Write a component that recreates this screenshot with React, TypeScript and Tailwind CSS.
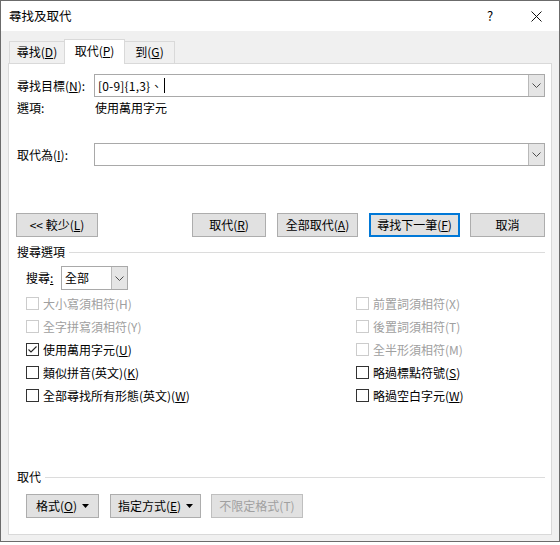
import type { ReactNode } from "react";

// Word 的「尋找及取代」對話方塊（取代分頁，展開更多選項）

function Chevron() {
  return (
    <svg width="9" height="5" viewBox="0 0 9 5">
      <polyline points="0.5,0.5 4.5,4.5 8.5,0.5" fill="none" stroke="#4d4d4d" strokeWidth="1" />
    </svg>
  );
}

function Caret() {
  return (
    <svg width="7" height="4" viewBox="0 0 7 4" className="ml-[5px]">
      <polygon points="0,0 7,0 3.5,4" fill="#000" />
    </svg>
  );
}

function Combo({ children, className }: { children?: ReactNode; className: string }) {
  return (
    <div className={`flex h-[23px] border border-[#a9a9a9] bg-white ${className}`}>
      <div className="flex flex-1 items-center overflow-hidden pl-[3px]">{children}</div>
      <div className="flex w-[16px] items-center justify-center border-l border-[#b9b9b9] bg-[#e5e5e5]">
        <Chevron />
      </div>
    </div>
  );
}

function Btn({
  children,
  className,
  primary,
  disabled,
  caret,
}: {
  children: ReactNode;
  className: string;
  primary?: boolean;
  disabled?: boolean;
  caret?: boolean;
}) {
  return (
    <div
      className={`flex h-[24px] items-center justify-center bg-[#e1e1e1] ${
        primary ? "border-2 border-[#0078d7]" : disabled ? "border border-[#bfbfbf]" : "border border-[#adadad]"
      } ${disabled ? "text-[#a0a0a0]" : "text-black"} ${className}`}
    >
      <span>{children}</span>
      {caret && <Caret />}
    </div>
  );
}

function Check({ label, checked, disabled }: { label: ReactNode; checked?: boolean; disabled?: boolean }) {
  return (
    <div className="flex h-[23px] items-center">
      <div
        className={`flex h-[13px] w-[13px] items-center justify-center border bg-white ${
          disabled ? "border-[#cccccc]" : "border-[#333333]"
        }`}
      >
        {checked && (
          <svg width="11" height="11" viewBox="0 0 11 11">
            <polyline points="1.5,5.5 4,8 9.5,2.5" fill="none" stroke="#222" strokeWidth="1.1" />
          </svg>
        )}
      </div>
      <span className={`ml-[4px] ${disabled ? "text-[#a0a0a0]" : "text-black"}`}>{label}</span>
    </div>
  );
}

function Section({ title }: { title: string }) {
  return (
    <div className="flex h-[16px] items-center">
      <span>{title}</span>
      <div className="ml-[4px] h-px flex-1 bg-[#dcdcdc]" />
    </div>
  );
}

export default function App() {
  return (
    <div className="h-[545px] w-[560px] bg-white font-['Noto_Sans_CJK_TC',sans-serif] text-[12px] leading-[16px] text-black">
      <div className="flex h-[542px] flex-col border border-[#6b6b6b] bg-[#f0f0f0]">
        {/* 標題列 */}
        <div className="flex h-[30px] items-center bg-white pl-2">
          <span className="flex-1 text-[12.5px]">尋找及取代</span>
          <span className="w-[46px] text-center text-[13px]">?</span>
          <div className="flex w-[46px] items-center justify-center">
            <svg width="11" height="11" viewBox="0 0 11 11">
              <path d="M0.5 0.5 L10.5 10.5 M10.5 0.5 L0.5 10.5" stroke="#111" strokeWidth="1" />
            </svg>
          </div>
        </div>

        {/* 分頁 */}
        <div className="flex h-[33px] items-end pl-2">
          <div className="flex h-[23px] w-[56px] items-center justify-center border border-[#d9d9d9] bg-[#f0f0f0] pb-[1px]">
            <span>
              尋找(<u>D</u>)
            </span>
          </div>
          <div className="relative z-10 -ml-px flex h-[25px] w-[61px] items-center justify-center border-x border-t border-[#d9d9d9] bg-white pb-[3px]">
            <span>
              取代(<u>P</u>)
            </span>
          </div>
          <div className="-ml-px flex h-[23px] w-[51px] items-center justify-center border border-[#d9d9d9] bg-[#f0f0f0] pb-[1px]">
            <span>
              到(<u>G</u>)
            </span>
          </div>
        </div>

        {/* 內容 */}
        <div className="mx-[7px] -mt-px flex h-[472px] flex-col border border-[#d9d9d9] bg-white pl-2 pr-[6px] pb-[16px]">
          <div className="mt-[10px] flex items-center">
            <span className="w-[77px]">
              尋找目標(<u>N</u>):
            </span>
            <Combo className="flex-1">
              <span className="tracking-[0.2px]">[0-9]{"{1,3}"}、</span>
              <span className="ml-[1px] inline-block h-[15px] w-px bg-black" />
            </Combo>
          </div>
          <div className="mt-[3px] flex h-[16px] items-center">
            <span className="w-[78px]">選項:</span>
            <span>使用萬用字元</span>
          </div>
          <div className="mt-[27px] flex items-center">
            <span className="w-[77px]">
              取代為(<u>I</u>):
            </span>
            <Combo className="flex-1" />
          </div>

          <div className="mt-[47px] flex">
            <Btn className="-ml-px w-[82px]">
              &lt;&lt; 較少(<u>L</u>)
            </Btn>
            <div className="flex-1" />
            <Btn className="w-[74px]">
              取代(<u>R</u>)
            </Btn>
            <Btn className="ml-[11px] w-[81px]">
              全部取代(<u>A</u>)
            </Btn>
            <Btn primary className="ml-[11px] w-[91px]">
              尋找下一筆(<u>F</u>)
            </Btn>
            <Btn className="ml-[10px] w-[75px]">取消</Btn>
          </div>

          <div className="mt-[7px]">
            <Section title="搜尋選項" />
          </div>

          <div className="mt-[6px] flex items-center pl-[9px]">
            <span className="w-[35px]">
              搜尋<u>:</u>
            </span>
            <Combo className="h-[24px] w-[67px]">
              <span>全部</span>
            </Combo>
          </div>

          <div className="mt-[2px] grid grid-cols-[330px_1fr] pl-[9px]">
            <div className="flex flex-col">
              <Check disabled label="大小寫須相符(H)" />
              <Check disabled label="全字拼寫須相符(Y)" />
              <Check
                checked
                label={
                  <>
                    使用萬用字元(<u>U</u>)
                  </>
                }
              />
              <Check
                label={
                  <>
                    類似拼音(英文)(<u>K</u>)
                  </>
                }
              />
              <Check
                label={
                  <>
                    全部尋找所有形態(英文)(<u>W</u>)
                  </>
                }
              />
            </div>
            <div className="flex flex-col">
              <Check disabled label="前置詞須相符(X)" />
              <Check disabled label="後置詞須相符(T)" />
              <Check disabled label="全半形須相符(M)" />
              <Check
                label={
                  <>
                    略過標點符號(<u>S</u>)
                  </>
                }
              />
              <Check
                label={
                  <>
                    略過空白字元(<u>W</u>)
                  </>
                }
              />
            </div>
          </div>

          <div className="flex-1" />

          <Section title="取代" />
          <div className="mt-[9px] flex pl-[9px]">
            <Btn caret className="w-[73px]">
              格式(<u>O</u>)
            </Btn>
            <Btn caret className="ml-[11px] w-[91px]">
              指定方式(<u>E</u>)
            </Btn>
            <Btn disabled className="ml-[10px] w-[92px]">
              不限定格式(T)
            </Btn>
          </div>
        </div>
      </div>
    </div>
  );
}
